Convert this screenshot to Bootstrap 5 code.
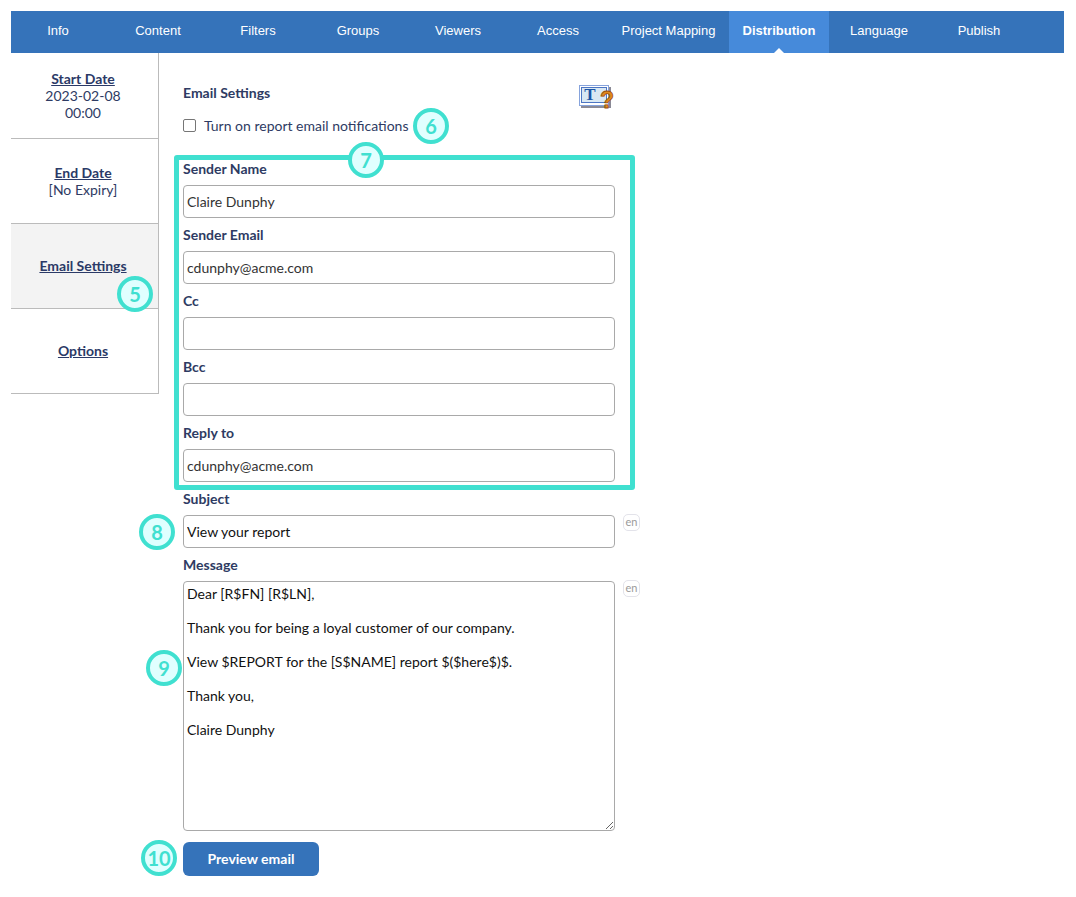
<!DOCTYPE html>
<html lang="en">
<head>
<meta charset="utf-8">
<title>Email Settings</title>
<link href="https://cdn.jsdelivr.net/npm/bootstrap@5.3.0/dist/css/bootstrap.min.css" rel="stylesheet">
<style>
html, body { background: #fff; }
body { font-family: Lato, "Liberation Sans", sans-serif; font-size: 14px; color: #2e3b63; line-height: 17px; }
.page-shell { position: relative; width: 1076px; height: 897px; padding: 11px 12px 0 11px; overflow: hidden; }
.tab-bar { background: #3573ba; height: 42px; overflow: hidden; }
.tab-list { margin-left: -3px; }
.tab-item { position: relative; width: 100px; height: 42px; padding-bottom: 4px; color: #fff; font-family: "Liberation Sans", Arial, sans-serif; font-size: 13px; text-decoration: none; }
.tab-item:hover { color: #fff; }
.tab-wide { width: 121px; }
.tab-on { background: #468ada; font-weight: 700; }
.tab-on::after { content: ""; position: absolute; left: 45px; bottom: 0; border: 5px solid transparent; border-top-width: 0; border-bottom-color: #fff; }
.side-col { width: 148px; flex: none; }
.side-row { height: 85px; padding-right: 3px; border-bottom: 1px solid #bbb; border-right: 1px solid #bbb; text-align: center; }
.side-first { height: 86px; }
.side-lift { padding-bottom: 2px; }
.side-row a { color: #2b3a67; font-weight: 700; }
.side-on { background: #f3f3f3; }
.main-col { width: 456px; padding: 28px 0 0 24px; }
.form-head { font-weight: 700; height: 22px; }
.help-mark { margin-left: auto; margin-right: 0; margin-top: 3px; align-self: flex-start; display: block; }
.check-row { height: 22px; margin-top: 11px; margin-bottom: 16px; gap: 8px; }
.check-row .form-check-input { width: 13px; height: 13px; margin: 0; border-color: #767676; border-radius: 2px; }
.field-cap { font-weight: 700; height: 33px; line-height: 33px; margin: 0; display: block; }
.field-line { width: 457px; gap: 8px; }
.form-control.field-box { width: 432px; height: 33px; flex: none; padding: 0 3px; font-size: 14px; border: 1px solid #a9a9a9; border-radius: 4px; color: #333; background: #fff; box-shadow: none; }
.form-control.field-dark { color: #111; }
textarea.form-control.field-area { height: 250px; min-height: 250px; padding: 3px; line-height: 17px; resize: both; }
.lang-tag { width: 17px; height: 17px; flex: none; border: 1px solid #e3e3ea; border-radius: 5px; color: #9a9a9a; font-size: 11px; line-height: 14px; text-align: center; margin-top: -1px; }
.btn.send-btn { width: 136px; height: 34px; margin-top: 11px; background: #3573ba; border: 0; border-radius: 6px; color: #fff; font-size: 14px; font-weight: 700; padding: 0 0 2px; display: block; }
.callout-box { position: absolute; left: 174px; top: 155px; width: 461px; height: 335px; border: 5px solid #40e0d0; border-radius: 3px; pointer-events: none; }
.callout-dot { position: absolute; width: 36px; height: 36px; border: 4px solid #40e0d0; border-radius: 50%; background: #e0ffff; color: #40e0d0; font-size: 20px; font-weight: 700; line-height: 1; }
.dot-5 { left: 117px; top: 276px; }
.dot-6 { left: 413px; top: 108px; }
.dot-7 { left: 348px; top: 142px; }
.dot-8 { left: 139px; top: 514px; }
.dot-9 { left: 146px; top: 650px; }
.dot-10 { left: 141px; top: 840px; }
</style>
</head>
<body>
<div class="page-shell">
  <nav class="tab-bar">
    <div class="tab-list d-flex">
      <a class="tab-item d-flex align-items-center justify-content-center" href="#">Info</a>
      <a class="tab-item d-flex align-items-center justify-content-center" href="#">Content</a>
      <a class="tab-item d-flex align-items-center justify-content-center" href="#">Filters</a>
      <a class="tab-item d-flex align-items-center justify-content-center" href="#">Groups</a>
      <a class="tab-item d-flex align-items-center justify-content-center" href="#">Viewers</a>
      <a class="tab-item d-flex align-items-center justify-content-center" href="#">Access</a>
      <a class="tab-item tab-wide d-flex align-items-center justify-content-center" href="#">Project Mapping</a>
      <a class="tab-item tab-on d-flex align-items-center justify-content-center" href="#">Distribution</a>
      <a class="tab-item d-flex align-items-center justify-content-center" href="#">Language</a>
      <a class="tab-item d-flex align-items-center justify-content-center" href="#">Publish</a>
    </div>
  </nav>
  <div class="d-flex">
    <aside class="side-col">
      <div class="side-row side-first d-flex flex-column justify-content-center"><a href="#">Start Date</a><span>2023-02-08</span><span>00:00</span></div>
      <div class="side-row d-flex flex-column justify-content-center"><a href="#">End Date</a><span>[No Expiry]</span></div>
      <div class="side-row side-on side-lift d-flex flex-column justify-content-center"><a href="#">Email Settings</a></div>
      <div class="side-row side-lift d-flex flex-column justify-content-center"><a href="#">Options</a></div>
    </aside>
    <main class="main-col">
      <div class="form-head d-flex align-items-center">
        <span>Email Settings</span>
        <svg class="help-mark" width="36" height="30" viewBox="0 0 36 30" role="img" aria-label="Text help">
          <rect x="2" y="3" width="30" height="21" fill="#8a8a96"/>
          <rect x="0.5" y="1.5" width="29" height="20" fill="#fff" stroke="#86a3dc"/>
          <rect x="2.5" y="3.5" width="25" height="15" fill="#d9e8f3" stroke="#4d76c4"/>
          <text x="11" y="16" font-family="Liberation Serif, serif" font-size="17" font-weight="700" fill="#1b55a6" text-anchor="middle">T</text>
          <text x="28" y="24" font-family="Liberation Sans, sans-serif" font-size="23" font-weight="700" fill="#e08a1e" stroke="#9a4d08" stroke-width="0.8" text-anchor="middle">?</text>
        </svg>
      </div>
      <div class="check-row d-flex align-items-center">
        <input class="form-check-input" type="checkbox" id="notify">
        <label for="notify">Turn on report email notifications</label>
      </div>
      <label class="field-cap">Sender Name</label>
      <input class="form-control field-box" type="text" value="Claire Dunphy">
      <label class="field-cap">Sender Email</label>
      <input class="form-control field-box" type="text" value="cdunphy@acme.com">
      <label class="field-cap">Cc</label>
      <input class="form-control field-box" type="text">
      <label class="field-cap">Bcc</label>
      <input class="form-control field-box" type="text">
      <label class="field-cap">Reply to</label>
      <input class="form-control field-box" type="text" value="cdunphy@acme.com">
      <label class="field-cap">Subject</label>
      <div class="field-line d-flex align-items-start">
        <input class="form-control field-box field-dark" type="text" value="View your report">
        <span class="lang-tag">en</span>
      </div>
      <label class="field-cap">Message</label>
      <div class="field-line d-flex align-items-start">
        <textarea class="form-control field-box field-dark field-area">Dear [R$FN] [R$LN],

Thank you for being a loyal customer of our company.

View $REPORT for the [S$NAME] report $($here$)$.

Thank you,

Claire Dunphy</textarea>
        <span class="lang-tag">en</span>
      </div>
      <button class="btn send-btn" type="button">Preview email</button>
    </main>
  </div>
  <div class="callout-box"></div>
  <div class="callout-dot dot-5 d-flex align-items-center justify-content-center">5</div>
  <div class="callout-dot dot-6 d-flex align-items-center justify-content-center">6</div>
  <div class="callout-dot dot-7 d-flex align-items-center justify-content-center">7</div>
  <div class="callout-dot dot-8 d-flex align-items-center justify-content-center">8</div>
  <div class="callout-dot dot-9 d-flex align-items-center justify-content-center">9</div>
  <div class="callout-dot dot-10 d-flex align-items-center justify-content-center">10</div>
</div>
<script src="https://cdn.jsdelivr.net/npm/bootstrap@5.3.0/dist/js/bootstrap.bundle.min.js"></script>
</body>
</html>
